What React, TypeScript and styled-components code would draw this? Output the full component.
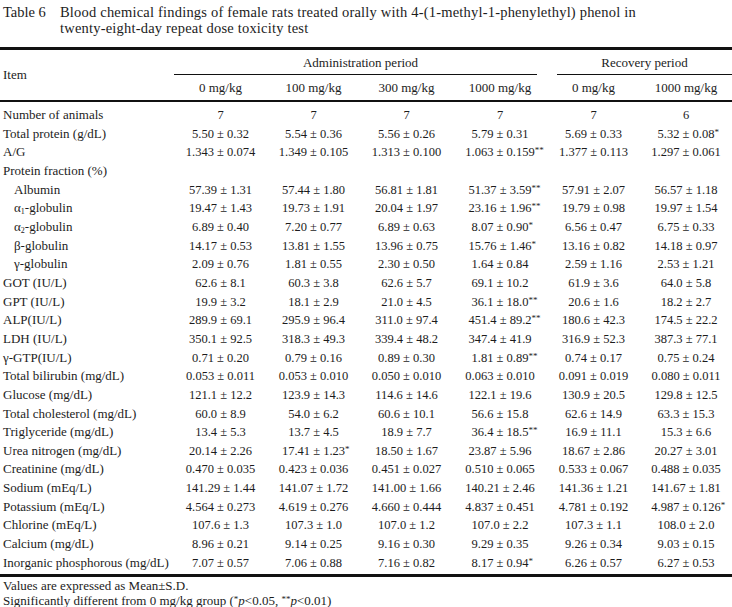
import React from 'react';
import styled, { createGlobalStyle } from 'styled-components';

const GlobalStyle = createGlobalStyle`
  html, body {
    margin: 0;
    padding: 0;
    background: #ffffff;
  }
  body {
    font-family: "Liberation Serif", "Times New Roman", serif;
    color: #1c1c1c;
  }
`;

type Row = {
  label: React.ReactNode;
  indent?: boolean;
  values?: string[];
};

const rows: Row[] = [
  { label: 'Number of animals', values: ['7', '7', '7', '7', '7', '6'] },
  {
    label: 'Total protein (g/dL)',
    values: ['5.50 ± 0.32', '5.54 ± 0.36', '5.56 ± 0.26', '5.79 ± 0.31', '5.69 ± 0.33', '5.32 ± 0.08*'],
  },
  {
    label: 'A/G',
    values: ['1.343 ± 0.074', '1.349 ± 0.105', '1.313 ± 0.100', '1.063 ± 0.159**', '1.377 ± 0.113', '1.297 ± 0.061'],
  },
  { label: 'Protein fraction (%)' },
  {
    label: 'Albumin',
    indent: true,
    values: ['57.39 ± 1.31', '57.44 ± 1.80', '56.81 ± 1.81', '51.37 ± 3.59**', '57.91 ± 2.07', '56.57 ± 1.18'],
  },
  {
    label: (
      <>
        α<sub>1</sub>-globulin
      </>
    ),
    indent: true,
    values: ['19.47 ± 1.43', '19.73 ± 1.91', '20.04 ± 1.97', '23.16 ± 1.96**', '19.79 ± 0.98', '19.97 ± 1.54'],
  },
  {
    label: (
      <>
        α<sub>2</sub>-globulin
      </>
    ),
    indent: true,
    values: ['6.89 ± 0.40', '7.20 ± 0.77', '6.89 ± 0.63', '8.07 ± 0.90*', '6.56 ± 0.47', '6.75 ± 0.33'],
  },
  {
    label: 'β-globulin',
    indent: true,
    values: ['14.17 ± 0.53', '13.81 ± 1.55', '13.96 ± 0.75', '15.76 ± 1.46*', '13.16 ± 0.82', '14.18 ± 0.97'],
  },
  {
    label: 'γ-globulin',
    indent: true,
    values: ['2.09 ± 0.76', '1.81 ± 0.55', '2.30 ± 0.50', '1.64 ± 0.84', '2.59 ± 1.16', '2.53 ± 1.21'],
  },
  {
    label: 'GOT (IU/L)',
    values: ['62.6 ± 8.1', '60.3 ± 3.8', '62.6 ± 5.7', '69.1 ± 10.2', '61.9 ± 3.6', '64.0 ± 5.8'],
  },
  {
    label: 'GPT (IU/L)',
    values: ['19.9 ± 3.2', '18.1 ± 2.9', '21.0 ± 4.5', '36.1 ± 18.0**', '20.6 ± 1.6', '18.2 ± 2.7'],
  },
  {
    label: 'ALP(IU/L)',
    values: ['289.9 ± 69.1', '295.9 ± 96.4', '311.0 ± 97.4', '451.4 ± 89.2**', '180.6 ± 42.3', '174.5 ± 22.2'],
  },
  {
    label: 'LDH (IU/L)',
    values: ['350.1 ± 92.5', '318.3 ± 49.3', '339.4 ± 48.2', '347.4 ± 41.9', '316.9 ± 52.3', '387.3 ± 77.1'],
  },
  {
    label: 'γ-GTP(IU/L)',
    values: ['0.71 ± 0.20', '0.79 ± 0.16', '0.89 ± 0.30', '1.81 ± 0.89**', '0.74 ± 0.17', '0.75 ± 0.24'],
  },
  {
    label: 'Total bilirubin (mg/dL)',
    values: ['0.053 ± 0.011', '0.053 ± 0.010', '0.050 ± 0.010', '0.063 ± 0.010', '0.091 ± 0.019', '0.080 ± 0.011'],
  },
  {
    label: 'Glucose (mg/dL)',
    values: ['121.1 ± 12.2', '123.9 ± 14.3', '114.6 ± 14.6', '122.1 ± 19.6', '130.9 ± 20.5', '129.8 ± 12.5'],
  },
  {
    label: 'Total cholesterol (mg/dL)',
    values: ['60.0 ± 8.9', '54.0 ± 6.2', '60.6 ± 10.1', '56.6 ± 15.8', '62.6 ± 14.9', '63.3 ± 15.3'],
  },
  {
    label: 'Triglyceride (mg/dL)',
    values: ['13.4 ± 5.3', '13.7 ± 4.5', '18.9 ± 7.7', '36.4 ± 18.5**', '16.9 ± 11.1', '15.3 ± 6.6'],
  },
  {
    label: 'Urea nitrogen (mg/dL)',
    values: ['20.14 ± 2.26', '17.41 ± 1.23*', '18.50 ± 1.67', '23.87 ± 5.96', '18.67 ± 2.86', '20.27 ± 3.01'],
  },
  {
    label: 'Creatinine (mg/dL)',
    values: ['0.470 ± 0.035', '0.423 ± 0.036', '0.451 ± 0.027', '0.510 ± 0.065', '0.533 ± 0.067', '0.488 ± 0.035'],
  },
  {
    label: 'Sodium (mEq/L)',
    values: ['141.29 ± 1.44', '141.07 ± 1.72', '141.00 ± 1.66', '140.21 ± 2.46', '141.36 ± 1.21', '141.67 ± 1.81'],
  },
  {
    label: 'Potassium (mEq/L)',
    values: ['4.564 ± 0.273', '4.619 ± 0.276', '4.660 ± 0.444', '4.837 ± 0.451', '4.781 ± 0.192', '4.987 ± 0.126*'],
  },
  {
    label: 'Chlorine (mEq/L)',
    values: ['107.6 ± 1.3', '107.3 ± 1.0', '107.0 ± 1.2', '107.0 ± 2.2', '107.3 ± 1.1', '108.0 ± 2.0'],
  },
  {
    label: 'Calcium (mg/dL)',
    values: ['8.96 ± 0.21', '9.14 ± 0.25', '9.16 ± 0.30', '9.29 ± 0.35', '9.26 ± 0.34', '9.03 ± 0.15'],
  },
  {
    label: 'Inorganic phosphorous (mg/dL)',
    values: ['7.07 ± 0.57', '7.06 ± 0.88', '7.16 ± 0.82', '8.17 ± 0.94*', '6.26 ± 0.57', '6.27 ± 0.53'],
  },
];

const Value: React.FC<{ text: string }> = ({ text }) => {
  const m = text.match(/^(.*?)(\**)$/);
  const base = m ? m[1] : text;
  const stars = m ? m[2] : '';
  return (
    <>
      {base}
      {stars && <Stars>{stars}</Stars>}
    </>
  );
};

const App: React.FC = () => {
  return (
    <>
      <GlobalStyle />
      <Page>
        <Caption>
          <CaptionNo>Table 6</CaptionNo>
          <CaptionText>
            Blood chemical findings of female rats treated orally with 4-(1-methyl-1-phenylethyl) phenol in
            <br />
            twenty-eight-day repeat dose toxicity test
          </CaptionText>
        </Caption>

        <Table>
          <colgroup>
            <col style={{ width: 174 }} />
            <col style={{ width: 93 }} />
            <col style={{ width: 93 }} />
            <col style={{ width: 93 }} />
            <col style={{ width: 94 }} />
            <col style={{ width: 93 }} />
            <col />
          </colgroup>
          <thead>
            <tr>
              <ItemHead rowSpan={2}>Item</ItemHead>
              <GroupHead colSpan={4}>
                <GroupLabel side="left">Administration period</GroupLabel>
              </GroupHead>
              <GroupHead colSpan={2}>
                <GroupLabel side="right">Recovery period</GroupLabel>
              </GroupHead>
            </tr>
            <tr>
              <DoseHead>0 mg/kg</DoseHead>
              <DoseHead>100 mg/kg</DoseHead>
              <DoseHead>300 mg/kg</DoseHead>
              <DoseHead>1000 mg/kg</DoseHead>
              <DoseHead>0 mg/kg</DoseHead>
              <DoseHead>1000 mg/kg</DoseHead>
            </tr>
          </thead>
          <tbody>
            {rows.map((r, i) => (
              <BodyRow key={i}>
                <LabelCell indent={r.indent}>{r.label}</LabelCell>
                {(r.values || ['', '', '', '', '', '']).map((v, j) => (
                  <ValueCell key={j}>
                    <Value text={v} />
                  </ValueCell>
                ))}
              </BodyRow>
            ))}
          </tbody>
        </Table>

        <Notes>
          <div>Values are expressed as Mean±S.D.</div>
          <div>
            Significantly different from 0 mg/kg group (<NoteStar>*</NoteStar>
            <I>p</I>&lt;0.05, <NoteStar>**</NoteStar>
            <I>p</I>&lt;0.01)
          </div>
        </Notes>
      </Page>
    </>
  );
};

export default App;

const Page = styled.div`
  width: 732px;
  height: 607px;
  overflow: hidden;
`;

const Caption = styled.div`
  display: flex;
  padding: 4px 0 0 3px;
  font-size: 14.5px;
  line-height: 16px;
  height: 43px;
`;

const CaptionNo = styled.div`
  width: 57px;
  flex: none;
`;

const CaptionText = styled.div`
  letter-spacing: 0.2px;
`;

const Table = styled.table`
  width: 732px;
  table-layout: fixed;
  border-collapse: collapse;
  border-top: 3px solid #111;
  border-bottom: 3px solid #111;
  font-size: 13px;
`;

const ItemHead = styled.th`
  text-align: left;
  font-weight: normal;
  padding: 0 0 0 3px;
  vertical-align: middle;
  border-bottom: 2px solid #111;
`;

const GroupHead = styled.th`
  font-weight: normal;
  padding: 0;
  height: 25px;
  vertical-align: bottom;
`;

const GroupLabel = styled.div<{ side: 'left' | 'right' }>`
  border-bottom: 1.5px solid #111;
  line-height: 23px;
  margin: ${(p) => (p.side === 'left' ? '0 10px 0 0' : '0 0 0 10px')};
  padding: ${(p) => (p.side === 'left' ? '0 0 0 10px' : '0')};
  text-align: center;
`;

const DoseHead = styled.th`
  font-weight: normal;
  padding: 0;
  height: 25px;
  text-align: center;
  border-bottom: 2px solid #111;
`;

const BodyRow = styled.tr`
  &:first-child > td {
    padding-top: 4px;
  }
  &:last-child > td {
    padding-bottom: 2px;
  }
`;

const LabelCell = styled.td<{ indent?: boolean }>`
  padding: 0 0 0 ${(p) => (p.indent ? 14 : 3)}px;
  height: 18.66px;
  line-height: 18.66px;
  white-space: nowrap;
  sub {
    font-size: 8px;
    vertical-align: -2px;
    line-height: 0;
  }
`;

const ValueCell = styled.td`
  padding: 0;
  text-align: center;
  font-size: 12.5px;
  line-height: 18.66px;
  white-space: nowrap;
`;

const Stars = styled.span`
  display: inline-block;
  width: 0;
  font-size: 9px;
  vertical-align: 3px;
  line-height: 0;
  white-space: nowrap;
`;

const Notes = styled.div`
  padding: 1px 0 0 3px;
  font-size: 13px;
  line-height: 15px;
`;

const NoteStar = styled.span`
  font-size: 9px;
  vertical-align: 3px;
  line-height: 0;
`;

const I = styled.i`
  font-style: italic;
`;
